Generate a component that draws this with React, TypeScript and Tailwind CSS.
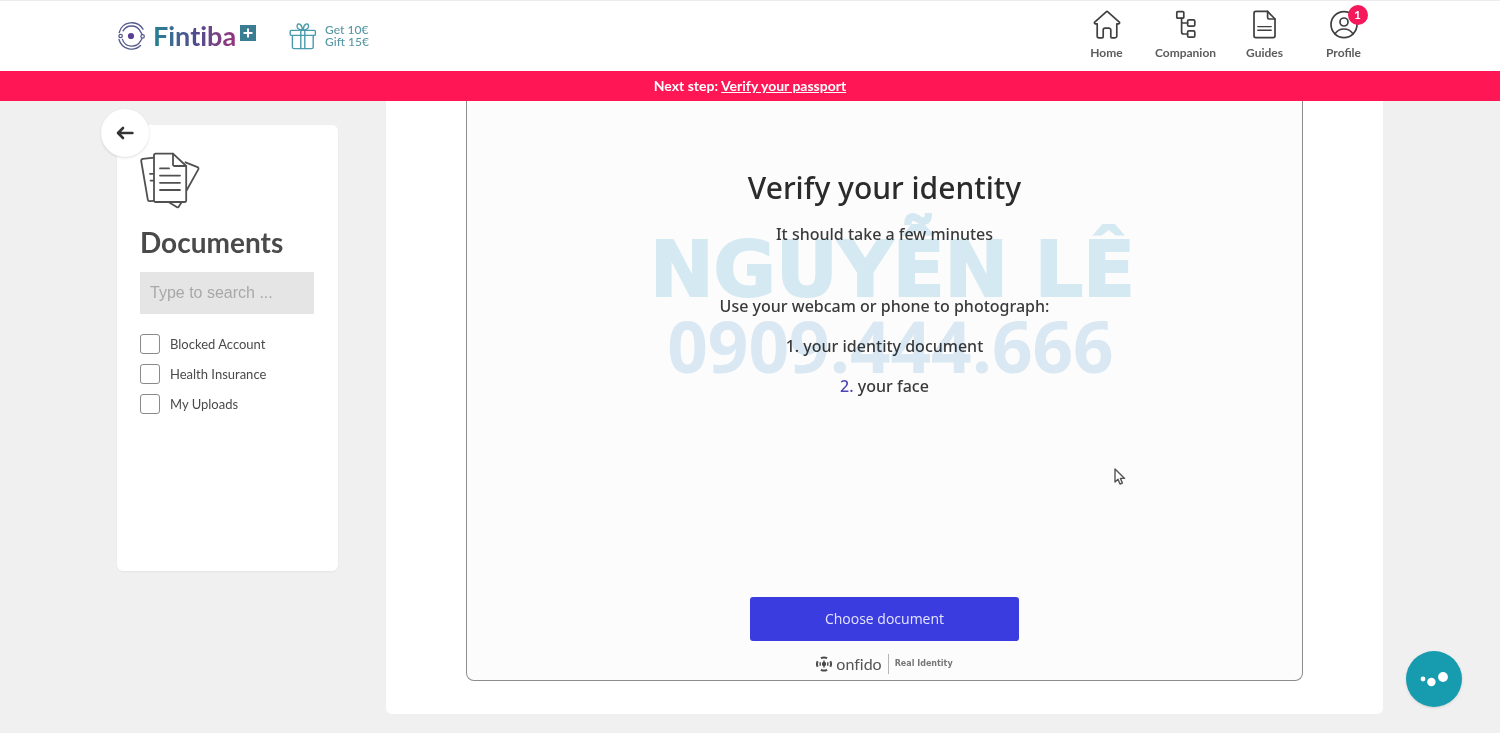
import type { ReactNode } from 'react';

const strokeProps = {
    fill: 'none',
    stroke: 'currentColor',
    strokeWidth: 1.7,
    strokeLinecap: 'round',
    strokeLinejoin: 'round',
} as const;

function LogoMark() {
    return (
        <svg viewBox="0 0 30 30" className="h-[30px] w-[30px]" fill="none" aria-hidden="true">
            <g stroke="#555a8c" strokeWidth="1.3" strokeLinecap="round">
                <path d="M2.2 11.5A13 13 0 0 1 26 8.2" />
                <path d="M2 18.5A13 13 0 0 0 23.5 24.5" />
                <path d="M6 9.8A10 10 0 0 1 23.8 11.2L25 13.2" />
                <path d="M5.4 18.4A10 10 0 0 0 23.5 20.2L25 17.5" />
                <circle cx="3.6" cy="15" r="1.7" />
                <circle cx="25.6" cy="15.4" r="1.7" />
            </g>
            <circle cx="14" cy="15" r="3.1" fill="#5b3f97" />
        </svg>
    );
}

function GiftIcon() {
    return (
        <svg viewBox="0 0 28 28" className="h-7 w-7 text-[#4a9bab]" {...strokeProps} strokeWidth={1.4} aria-hidden="true">
            <rect x="1.2" y="8.4" width="25.2" height="5" rx="1" />
            <path d="M3.4 13.4V25a1.6 1.6 0 0 0 1.6 1.6h17.6a1.6 1.6 0 0 0 1.6-1.6V13.4" />
            <path d="M11.8 8.4v18.2M15.8 8.4v18.2" />
            <path d="M13.4 8.2C9.4 8 7.4 5.8 8.2 3.3 9.2 .4 13.2 2 13.4 8.2z" />
            <path d="M14.2 8.2C18.2 8 20.2 5.8 19.4 3.3 18.4 .4 14.4 2 14.2 8.2z" />
        </svg>
    );
}

function HomeIcon() {
    return (
        <svg viewBox="0 0 28 30" className="h-[30px] w-7" {...strokeProps} aria-hidden="true">
            <path d="M13.2 1.8Q14 1.1 14.8 1.8L26.3 12.2c.6.6.2 1.6-.6 1.6H23.8V26a1.8 1.8 0 0 1-1.8 1.8h-3.2a1 1 0 0 1-1-1V20a1.8 1.8 0 0 0-1.8-1.8h-4A1.8 1.8 0 0 0 10.2 20v6.8a1 1 0 0 1-1 1H6A1.8 1.8 0 0 1 4.2 26V13.8H2.3c-.8 0-1.2-1-.6-1.6z" />
        </svg>
    );
}

function CompanionIcon() {
    return (
        <svg viewBox="0 0 28 30" className="h-[30px] w-7" {...strokeProps} aria-hidden="true">
            <rect x="4.8" y="1.6" width="7" height="6.6" rx="1" />
            <rect x="15.6" y="9.8" width="7.2" height="6.4" rx="1.4" />
            <rect x="15.6" y="20.8" width="7.2" height="6.4" rx="1.4" />
            <path d="M9.6 8.2V22a2 2 0 0 0 2 2h4M9.6 13h6" />
        </svg>
    );
}

function GuidesIcon() {
    return (
        <svg viewBox="0 0 28 30" className="h-[30px] w-7" {...strokeProps} aria-hidden="true">
            <path d="M16.6 1.4H4.8A1.8 1.8 0 0 0 3 3.2v22.6a1.8 1.8 0 0 0 1.8 1.8h17.4a1.8 1.8 0 0 0 1.8-1.8V9z" />
            <path d="M16.6 1.4V7.6A1.4 1.4 0 0 0 18 9h6" />
            <path d="M6.8 16.6h13.4M6.8 20.2h13.4" strokeWidth="1.4" />
        </svg>
    );
}

function ProfileIcon() {
    return (
        <svg viewBox="0 0 28 30" className="h-[30px] w-7" {...strokeProps} aria-hidden="true">
            <circle cx="14" cy="14.6" r="13" />
            <circle cx="14" cy="12" r="4" />
            <path d="M5 23.8c2.2-3.2 5.2-4.8 9-4.8s6.8 1.6 9 4.8" />
        </svg>
    );
}

function DocumentsIcon() {
    return (
        <svg viewBox="0 0 60 58" className="h-[58px] w-[60px] text-[#505050]" {...strokeProps} strokeWidth={1.8} aria-hidden="true">
            <path d="M14 5.6 2.8 6.9A1.8 1.8 0 0 0 1.2 9l6.6 38.6a1.8 1.8 0 0 0 2 1.5l4.2-.3" />
            <path d="M10 21.8h3M10.6 28.6h3" />
            <path d="M45.5 10.3l12 4.8a1.6 1.6 0 0 1 .8 2.3L46.8 38" />
            <path d="M28.5 50l8.6 5.2a1.2 1.2 0 0 0 1.6-.4l3-4.8" />
            <path d="M33 1.6H15.8A1.8 1.8 0 0 0 14 3.4v44.8A1.8 1.8 0 0 0 15.8 50h28.6a1.8 1.8 0 0 0 1.8-1.8V14z" />
            <path d="M33 1.6v10.8a1.6 1.6 0 0 0 1.6 1.6h11.6" />
            <path d="M20 16.4h9M20 23.6h20M20 30.8h20M20 38h20" />
        </svg>
    );
}

function BackArrow() {
    return (
        <svg viewBox="0 0 18 14" className="h-[14px] w-[18px]" {...strokeProps} strokeWidth={2.6} aria-hidden="true">
            <path d="M16.4 7H3M7 2 2 7l5 5" />
        </svg>
    );
}

function OnfidoMark() {
    return (
        <svg viewBox="0 0 16 16" className="h-4 w-4" fill="none" stroke="#4a4a4a" aria-hidden="true">
            <g strokeWidth="2">
                <path d="M4.9 2.2Q8 .6 11.1 2.2" />
                <path d="M4.9 13.8Q8 15.4 11.1 13.8" />
                <path d="M1.7 5.2Q.2 8 1.7 10.8" />
                <path d="M14.3 5.2Q15.8 8 14.3 10.8" />
            </g>
            <path d="M4.2 6.2v3.6M11.8 6.2v3.6M8 4.6v6.8" strokeWidth="1.4" />
            <circle cx="8" cy="8" r="2.2" fill="#4a4a4a" stroke="none" />
        </svg>
    );
}

function NavItem({ label, icon, badge }: { label: string; icon: ReactNode; badge?: number }) {
    return (
        <a href="#" className="flex w-[79px] flex-col items-center text-[#3f3f3f]">
            <span className="relative">
                {icon}
                {badge && (
                    <span className="absolute -top-[5px] -right-[10px] flex h-5 w-5 items-center justify-center rounded-full bg-[#f5185a] text-xs font-bold text-white">
                        {badge}
                    </span>
                )}
            </span>
            <span className="mt-[5px] text-xs leading-4 font-bold text-[#5c5c5c]">{label}</span>
        </a>
    );
}

const filters = ['Blocked Account', 'Health Insurance', 'My Uploads'];

export default function App() {
    return (
        <div className="flex min-h-screen flex-col bg-[#f0f0f0] font-[Lato,sans-serif] text-[#4a4a4a]">
            <header className="border-t border-[#ececec] bg-white">
                <div className="mx-auto flex h-[70px] w-full max-w-[1266px] items-center">
                    <a href="#" className="flex items-center">
                        <LogoMark />
                        <span className="ml-1.5 bg-linear-to-r from-[#1c8295] via-[#4d4c8c] to-[#96307c] bg-clip-text text-[27px] leading-8 font-bold text-transparent [font-variant-ligatures:none]">
                            Fintiba
                        </span>
                        <span className="mb-1.5 ml-1 flex h-4 w-4 items-center justify-center bg-[#3a7d92] text-white">
                            <svg viewBox="0 0 10 10" className="h-2.5 w-2.5" stroke="currentColor" strokeWidth="2" aria-hidden="true">
                                <path d="M5 0.5v9M0.5 5h9" />
                            </svg>
                        </span>
                    </a>
                    <a href="#" className="ml-[33px] flex items-center gap-2 text-xs leading-3 font-medium text-[#5797a4]">
                        <GiftIcon />
                        <span>
                            Get 10€
                            <br />
                            Gift 15€
                        </span>
                    </a>
                    <nav className="mb-px ml-auto flex">
                        <NavItem label="Home" icon={<HomeIcon />} />
                        <NavItem label="Companion" icon={<CompanionIcon />} />
                        <NavItem label="Guides" icon={<GuidesIcon />} />
                        <NavItem label="Profile" icon={<ProfileIcon />} badge={1} />
                    </nav>
                </div>
            </header>

            <div className="flex h-[30px] items-center justify-center gap-[3px] bg-[#ff1654] text-sm font-bold text-white">
                <span>Next step:</span>
                <a href="#" className="underline">Verify your passport</a>
            </div>

            <div className="mx-auto flex w-full max-w-[1266px] flex-1 gap-12 pb-[19px]">
                <aside className="relative mt-6 min-h-[446px] w-[221px] shrink-0 self-start rounded-md bg-white pt-[27px] pr-6 pl-[23px] shadow-xs">
                    <button
                        type="button"
                        aria-label="Back"
                        className="absolute -top-4 -left-4 flex h-12 w-12 items-center justify-center rounded-full bg-white text-[#333] shadow-sm"
                    >
                        <BackArrow />
                    </button>
                    <DocumentsIcon />
                    <h1 className="mt-[14px] text-[28px] leading-9 font-bold">Documents</h1>
                    <input
                        type="search"
                        aria-label="Search documents"
                        placeholder="Type to search ..."
                        className="mt-3 h-[42px] w-full bg-[#e5e5e5] px-2.5 font-['Liberation_Sans',sans-serif] text-base placeholder:text-[#a8a8a8]"
                    />
                    <div className="mt-5 flex flex-col gap-2.5">
                        {filters.map((name) => (
                            <label key={name} className="flex items-center gap-2.5 text-[13px] leading-5">
                                <input
                                    type="checkbox"
                                    className="h-5 w-5 appearance-none rounded-[3px] border border-[#8a8a8a] bg-white checked:bg-[#1a9bb0]"
                                />
                                {name}
                            </label>
                        ))}
                    </div>
                </aside>

                <main className="relative flex flex-1 flex-col rounded-b-md bg-white px-20 pb-[33px]">
                    <section className="flex flex-1 flex-col items-center rounded-b-lg border border-t-0 border-[#8c8c8c] bg-[#fcfcfc] pb-1.5 font-['Noto_Sans','Open_Sans',sans-serif] text-[#3a3a3a]">
                        <h2 className="mt-[65px] text-3xl leading-[44px] font-medium text-[#2b2b2b]">Verify your identity</h2>
                        <p className="mt-3 text-base leading-6 font-medium">It should take a few minutes</p>
                        <p className="mt-12 text-base leading-6 font-medium">Use your webcam or phone to photograph:</p>
                        <ol className="mt-4 flex flex-col items-center gap-4 text-base leading-6 font-medium">
                            <li>1. your identity document</li>
                            <li>
                                <span className="text-[#4b45b5]">2.</span> your face
                            </li>
                        </ol>
                        <button
                            type="button"
                            className="mt-auto h-11 w-[269px] rounded-[3px] bg-[#3b3ce0] font-['Open_Sans',sans-serif] text-sm text-[#e4e4ff]"
                        >
                            Choose document
                        </button>
                        <div className="mt-[13px] flex items-center text-[#555]">
                            <OnfidoMark />
                            <span className="ml-1 font-[Lato,sans-serif] text-base leading-5 [font-variant-ligatures:none]">onfido</span>
                            <span className="mx-1.5 h-5 w-px bg-[#b5b5b5]" />
                            <span className="font-['DejaVu_Sans',sans-serif] text-[8px] font-bold text-[#777]">Real Identity</span>
                        </div>
                    </section>

                    <div className="pointer-events-none absolute inset-x-0 top-[125px] flex flex-col items-center pl-4 whitespace-nowrap mix-blend-multiply">
                        <span className="font-['DejaVu_Sans',sans-serif] text-[76px] leading-[88px] font-bold text-[#d8ecf5] [-webkit-text-stroke:2px_#d8ecf5]">
                            NGUYỄN LÊ
                        </span>
                        <span className="pr-1 font-['Open_Sans',sans-serif] text-[71px] leading-[64px] font-bold text-[#dcebf5]">0909.444.666</span>
                    </div>

                    <svg viewBox="0 0 12 18" className="absolute top-[367px] left-[728px] h-[18px] w-3" aria-hidden="true">
                        <path
                            d="M1 1v13l3-2.8 2 4.8 2.4-1-2-4.6H10.6z"
                            fill="#fff"
                            stroke="#555"
                            strokeWidth="1.4"
                            strokeLinejoin="round"
                        />
                    </svg>
                </main>
            </div>

            <button
                type="button"
                aria-label="Open chat"
                className="fixed right-[38px] bottom-[26px] h-14 w-14 rounded-full bg-[#179baf] shadow-sm"
            >
                <svg viewBox="0 0 56 56" className="h-14 w-14" fill="#fff" aria-hidden="true">
                    <circle cx="17" cy="28" r="2.4" />
                    <circle cx="25.4" cy="31" r="4.2" />
                    <circle cx="37" cy="26" r="4.9" />
                </svg>
            </button>
        </div>
    );
}
